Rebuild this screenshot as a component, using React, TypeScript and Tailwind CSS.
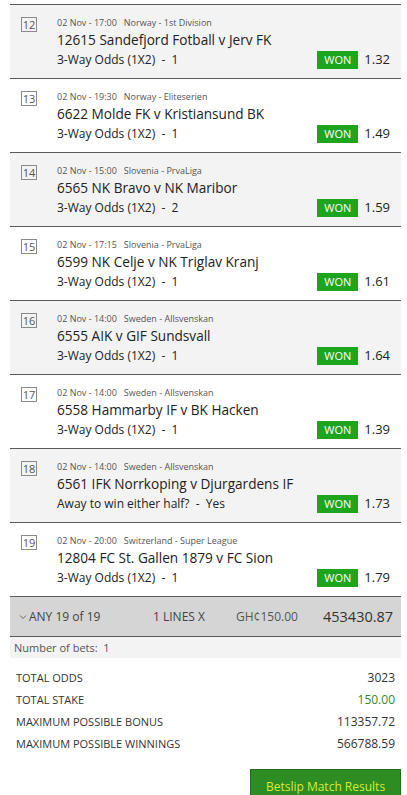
import React from 'react';

interface Selection {
  no: number;
  date: string;
  league: string;
  match: string;
  market: string;
  pick: string;
  odds: string;
}

const selections: Selection[] = [
  { no: 12, date: '02 Nov - 17:00', league: 'Norway - 1st Division', match: '12615 Sandefjord Fotball v Jerv FK', market: '3-Way Odds (1X2)', pick: '1', odds: '1.32' },
  { no: 13, date: '02 Nov - 19:30', league: 'Norway - Eliteserien', match: '6622 Molde FK v Kristiansund BK', market: '3-Way Odds (1X2)', pick: '1', odds: '1.49' },
  { no: 14, date: '02 Nov - 15:00', league: 'Slovenia - PrvaLiga', match: '6565 NK Bravo v NK Maribor', market: '3-Way Odds (1X2)', pick: '2', odds: '1.59' },
  { no: 15, date: '02 Nov - 17:15', league: 'Slovenia - PrvaLiga', match: '6599 NK Celje v NK Triglav Kranj', market: '3-Way Odds (1X2)', pick: '1', odds: '1.61' },
  { no: 16, date: '02 Nov - 14:00', league: 'Sweden - Allsvenskan', match: '6555 AIK v GIF Sundsvall', market: '3-Way Odds (1X2)', pick: '1', odds: '1.64' },
  { no: 17, date: '02 Nov - 14:00', league: 'Sweden - Allsvenskan', match: '6558 Hammarby IF v BK Hacken', market: '3-Way Odds (1X2)', pick: '1', odds: '1.39' },
  { no: 18, date: '02 Nov - 14:00', league: 'Sweden - Allsvenskan', match: '6561 IFK Norrkoping v Djurgardens IF', market: 'Away to win either half?', pick: 'Yes', odds: '1.73' },
  { no: 19, date: '02 Nov - 20:00', league: 'Switzerland - Super League', match: '12804 FC St. Gallen 1879 v FC Sion', market: '3-Way Odds (1X2)', pick: '1', odds: '1.79' },
];

const totals = [
  { label: 'TOTAL ODDS', value: '3023', green: false },
  { label: 'TOTAL STAKE', value: '150.00', green: true },
  { label: 'MAXIMUM POSSIBLE BONUS', value: '113357.72', green: false },
  { label: 'MAXIMUM POSSIBLE WINNINGS', value: '566788.59', green: false },
];

const SelectionRow: React.FC<{ s: Selection; shaded: boolean }> = ({ s, shaded }) => (
  <div className={`flex h-[74px] border-b border-[#5a5a5a] pt-[10px] ${shaded ? 'bg-[#f3f3f3]' : 'bg-white'}`}>
    <div className="w-[47px] shrink-0 pl-[11px] pt-[2px]">
      <div className="w-[16px] h-[15px] border border-[#8a8a8a] text-[11px] leading-[13px] text-[#555] text-center">{s.no}</div>
    </div>
    <div className="flex-1 pr-[11px]">
      <div className="text-[9px] leading-[15px] text-[#555]">
        {s.date}
        <span className="ml-[7px]">{s.league}</span>
      </div>
      <div className="text-[13.6px] leading-[20px] text-[#222]">{s.match}</div>
      <div className="flex items-center justify-between h-[20px]">
        <div className="text-[12px] text-[#222] whitespace-pre">{`${s.market}  -  ${s.pick}`}</div>
        <div className="flex items-center gap-[6px]">
          <span className="w-[41px] h-[18px] bg-[#1ea51e] text-white text-[11px] leading-[18px] text-center">WON</span>
          <span className="text-[13px] text-[#222]">{s.odds}</span>
        </div>
      </div>
    </div>
  </div>
);

export default function App() {
  return (
    <div className="w-[407px] bg-white pt-[4px] pb-2" style={{ fontFamily: '"Open Sans", "Noto Sans", sans-serif' }}>
      <div className="ml-[10px] w-[391px] border-t border-[#5a5a5a]">
        {selections.map((s, i) => (
          <SelectionRow key={s.no} s={s} shaded={i % 2 === 0} />
        ))}
        <div className="flex items-center h-[40px] bg-[#d5d5d5] border-b border-[#5a5a5a] text-[#444] text-[12px]">
          <div className="w-[143px] pl-[9px] flex items-center">
            <svg width="8" height="6" viewBox="0 0 8 6" className="mr-[2px] mt-[1px]">
              <path d="M1 1.5 L4 4.5 L7 1.5" fill="none" stroke="#666" strokeWidth="1" />
            </svg>
            ANY 19 of 19
          </div>
          <div className="w-[83px]">1 LINES X</div>
          <div className="w-[87px] text-[#555]">GH¢150.00</div>
          <div className="text-[14.5px] text-[#333]">453430.87</div>
        </div>
        <div className="h-[21px] bg-[#f3f3f3] pl-[4px] text-[11px] leading-[21px] text-[#555]">Number of bets:&nbsp; 1</div>
        <div className="pt-[9px] pl-[6px] pr-[6px]">
          {totals.map(t => (
            <div key={t.label} className="flex justify-between h-[22px] items-center text-[11px]">
              <span className="text-[#333]">{t.label}</span>
              <span className={`text-[12px] ${t.green ? 'text-[#2e8b2e]' : 'text-[#333]'}`}>{t.value}</span>
            </div>
          ))}
        </div>
        <div className="flex justify-end mt-[14px]">
          <button className="w-[151px] h-[32px] bg-[#2d8c22] border border-[#226b1a] text-[#d8ea3a] text-[12px] pt-[3px]">
            Betslip Match Results
          </button>
        </div>
      </div>
    </div>
  );
}
